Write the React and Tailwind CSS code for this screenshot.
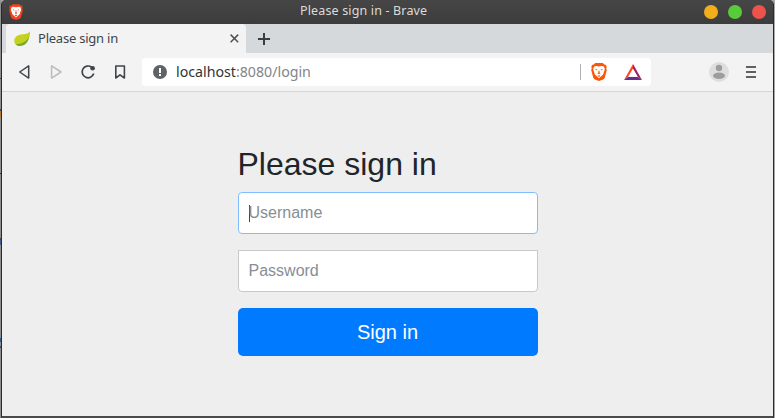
import React from "react";

function LionShield({ className, fill, face, width, height }) {
  return (
    <svg className={className} width={width} height={height} viewBox="0 0 16 18">
      <path fill={fill} d="M4.2 0h7.6l1.4 1.6 1.4.1 1.2 2-.6 1.4.6 1.8-2.1 8-1.5 1.7L8 18l-4.2-1.4-1.5-1.7-2.1-8 .6-1.8-.6-1.4 1.2-2 1.4-.1z" />
      <path fill={face} d="M3.2 3.4 5.4 3l2.6.5 2.6-.5 2.2.4 1.1 2.7-1.8 5.4-2.2 2L8 15.3l-1.9-1.8-2.2-2L2.1 6.1z" />
      <path fill={fill} d="m4.4 6 2 .4-.3.8-1.4-.1zm7.2 0-2 .4.3.8 1.4-.1zM7.6 7.4h.8l.3 2.4.8.6L8 11.3l-1.5-.9.8-.6zM6.4 12.8l1.6-.6 1.6.6L8 14z" />
    </svg>
  );
}

function TitleBar() {
  return (
    <header className="flex h-6 shrink-0 items-center bg-linear-to-b from-[#464646] to-[#3c3c3c] px-[7px]">
      <LionShield width={14} height={16} fill="#f4421d" face="#ffffff" />
      <div className="ml-[277px] grow pb-[2px] text-[12.5px] leading-none tracking-[0.15px] whitespace-pre text-[#dcdcdc]">
        Please sign in - Brave
      </div>
      <div className="flex gap-[10px]">
        <span className="size-[14px] rounded-full bg-[#f3ae1b]" />
        <span className="size-[14px] rounded-full bg-[#58cb3a]" />
        <span className="size-[14px] rounded-full bg-[#ee534b]" />
      </div>
    </header>
  );
}

function TabStrip() {
  return (
    <div className="flex h-[29px] shrink-0 bg-[#d5d9dc] pl-1">
      <div className="flex w-60 items-center rounded-t bg-[#f3f3f3] pr-[7px] pl-[8px]">
        <svg width="17" height="16" viewBox="0 0 17 16">
          <path fill="#c4d11d" d="M15.7 0c-1 2.7-3.5 2.9-7 3.3C3.5 3.9.3 6 .3 10.1c0 2 1 3.4 2.2 4.2C7.8 14.2 12 12.5 14 9c1.8-3 2.4-5.4 1.7-9z" />
          <path fill="#75a928" d="M2 13c5.1.5 10.1-2 13.1-7.2C14.5 11 11 15.3 5.4 15.1c-1.5 0-2.7-.7-3.4-2.1z" />
        </svg>
        <span className="mt-px ml-[7px] grow text-[13px] tracking-[-0.23px] text-[#3d454b]">Please sign in</span>
        <svg width="9" height="9" viewBox="0 0 9 9" fill="none" stroke="#505356" strokeWidth="1.5">
          <path d="m.6.6 7.6 7.6M8.2.6.6 8.2" />
        </svg>
      </div>
      <svg className="mt-[9px] ml-3" width="12" height="12" viewBox="0 0 12 12" stroke="#3b3e40" strokeWidth="2">
        <path d="M6 0v12M0 6h12" />
      </svg>
    </div>
  );
}

function Toolbar() {
  return (
    <div className="flex h-[39px] shrink-0 items-center border-b border-[#d5d5d5] bg-[#f3f3f3] pl-4">
      <svg width="108" height="16" viewBox="0 0 108 16" fill="none" strokeLinejoin="round" strokeWidth="1.5">
        <path stroke="#414549" d="M10.7 1.9v12.2L1.7 8z" />
        <path stroke="#bcbcbc" d="M33.6 1.9v12.2L43 8z" />
        <path stroke="#414549" strokeWidth="1.7" d="M73.6 3.2A5.9 5.9 0 1 0 75.7 9.6" />
        <circle cx="74.6" cy="4.3" r="2.3" fill="#414549" />
        <path stroke="#414549" strokeWidth="1.6" d="M97.8 2h8.6v12L102 10.8 97.8 14z" />
      </svg>
      <div className="ml-4 flex h-7 w-[509px] items-center rounded-[4px] bg-white pr-[9px] pl-[11px]">
        <svg width="14" height="14" viewBox="0 0 14 14">
          <circle cx="7" cy="7" r="7" fill="#5f6368" />
          <path fill="#fff" d="M6 3h2v5H6zm0 6h2v2H6z" />
        </svg>
        <span className="ml-[9px] grow text-[14.2px] leading-none text-[#80868b]">
          <span className="text-[#303438]">localhost</span>:8080/login
        </span>
        <span className="h-4 w-px bg-[#aeb1b5]" />
        <LionShield className="ml-[10px]" width={16} height={18} fill="#fb5607" face="#ffffff" />
        <svg className="ml-[17px]" width="18" height="16" viewBox="0 0 18 16">
          <path fill="#ff4724" d="M9 0v5L4.3 12.8 0 16z" />
          <path fill="#9e1f63" d="m9 0 9 16-4.3-3.2L9 5z" />
          <path fill="#662d91" d="M0 16l4.3-3.2h9.4L18 16z" />
          <path fill="#fff" d="m9 4.8 4.7 8H4.3z" />
        </svg>
      </div>
      <svg className="ml-[58px]" width="20" height="20" viewBox="0 0 20 20">
        <circle cx="10" cy="10" r="10" fill="#dedede" />
        <circle cx="10" cy="6" r="3.2" fill="#9d9d9d" />
        <ellipse cx="10" cy="13.8" rx="6" ry="3.2" fill="#9d9d9d" />
      </svg>
      <svg className="ml-[17px]" width="10" height="12" viewBox="0 0 10 12" fill="#5e625f">
        <path d="M0 0h10v2H0zm0 5h10v2H0zm0 5h10v2H0z" />
      </svg>
    </div>
  );
}

function SignInForm() {
  return (
    <main className="grow bg-[#eeeeee] pt-[53px] font-['Liberation_Sans',Arial,sans-serif]">
      <form className="ml-[236px] flex w-[300px] flex-col">
        <h2 className="mb-2 -ml-[0.5px] text-[32px] leading-[39px] text-[#212529]">Please sign in</h2>
        <div className="flex h-[42px] items-center rounded-[4px] border border-[#80bdff] bg-white pl-[10px] text-base text-[#868e96]">
          <span className="h-[17px] w-px bg-[#444]" />
          <span className="-ml-[1.5px]">Username</span>
        </div>
        <div className="mt-4 flex h-[42px] items-center rounded-b-[4px] border border-[#c8c8c8] bg-white pl-[9.5px] text-base text-[#868e96]">
          Password
        </div>
        <button type="button" className="mt-4 h-12 rounded-[5px] bg-[#007bff] pr-px text-xl text-white">
          Sign in
        </button>
      </form>
    </main>
  );
}

/* Slivers of the window that sits behind the browser's left edge. */
function DesktopEdge() {
  return (
    <div className="flex w-px shrink-0 flex-col bg-[#8f8f8f]">
      <span className="mt-[78px] h-px bg-[#34465c]" />
      <span className="mt-[30px] h-[2px] bg-[#5c4534]" />
      <span className="h-[6px] bg-[#b87631]" />
      <span className="mt-[56px] h-px bg-[#333333]" />
      <span className="mt-[64px] h-[2px] bg-[#5c4534]" />
      <span className="h-[5px] bg-[#3d5f88]" />
      <span className="mt-[93px] h-[4px] bg-[#315b94]" />
      <span className="mt-[4px] h-[2px] bg-[#43536a]" />
    </div>
  );
}

export default function App() {
  return (
    <div className="flex h-[418px] w-[775px] overflow-hidden bg-[#a8a8a8] font-['Noto_Sans',sans-serif]">
      <DesktopEdge />
      <div className="flex w-[773px] flex-col overflow-hidden rounded-t-[5px] border-x border-b-2 border-x-[#292929] border-b-[#4a4848] bg-[#404040]">
        <TitleBar />
        <TabStrip />
        <Toolbar />
        <SignInForm />
      </div>
    </div>
  );
}
